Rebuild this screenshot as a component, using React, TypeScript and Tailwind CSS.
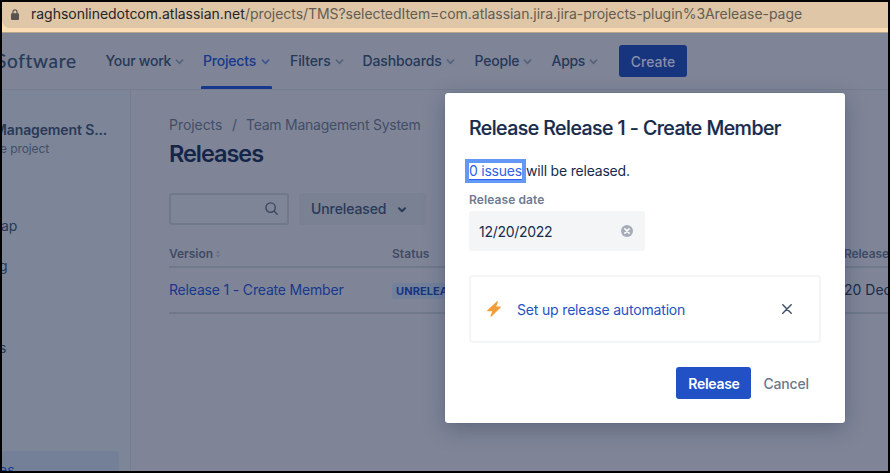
import React from "react";

function Chevron({ className }: { className: string }) {
  return (
    <svg viewBox="0 0 8 6" className={className} fill="none" stroke="currentColor" strokeWidth="1.7" strokeLinecap="round" strokeLinejoin="round">
      <path d="M1 1.2 4 4.3 7 1.2" />
    </svg>
  );
}

const navItems = [
  { label: "Your work", item: "w-[97px]", text: "-ml-[0.5px] w-[69px] tracking-[-0.25px]" },
  { label: "Projects", item: "w-[87px]", text: "w-[58px] tracking-[-0.2px]", active: true },
  { label: "Filters", item: "w-[73px]", text: "w-[45px] tracking-[-0.1px]" },
  { label: "Dashboards", item: "w-[112px]", text: "-ml-[0.5px] w-[83px] tracking-[-0.15px]" },
  { label: "People", item: "w-[77px]", text: "-ml-[0.5px] w-[48px] tracking-[-0.2px]" },
  { label: "Apps", item: "w-[67px]", text: "-ml-[0.5px] w-[37px] tracking-[-0.3px]" },
];

function AddressBar() {
  return (
    <div className="h-[31px] shrink-0 border-b border-[#b6a68d] bg-[#fcdcb4]">
      <div className="flex h-[26px] items-center rounded-bl-[8px] bg-[#dec6a6] pl-[9px]">
        <svg viewBox="0 0 8 11" className="-mt-[1px] h-[11px] w-[8px] text-[#58534f]">
          <rect x="0" y="4.3" width="8" height="6.7" rx="1" fill="currentColor" />
          <path d="M2 5V2.8a2 2 0 0 1 4 0V5" fill="none" stroke="currentColor" strokeWidth="1.2" />
        </svg>
        <div className="-mt-[2px] ml-[12px] flex whitespace-pre text-[14px] leading-[20px] text-[#635c53]">
          <span className="w-[214px] tracking-[-0.02px] text-[#24252a]">raghsonlinedotcom.atlassian.net</span>
          <span className="tracking-[-0.05px]">/projects/TMS?selectedItem=com.atlassian.jira.jira-projects-plugin%3Arelease-page</span>
        </div>
      </div>
    </div>
  );
}

function TopNav() {
  return (
    <header className="flex h-[57px] shrink-0 items-stretch border-b border-[#747e8f]">
      <div className="flex w-[104px] shrink-0 items-center overflow-hidden">
        <span className="-ml-[6px] whitespace-nowrap font-['Lato'] text-[19px] leading-[24px] tracking-[0.7px] text-[#263959] [-webkit-text-stroke:0.2px_#263959]">Software</span>
      </div>
      {navItems.map((n) => (
        <div key={n.label} className={`flex shrink-0 flex-col whitespace-nowrap text-[14px] font-medium text-[#253858] ${n.item}`}>
          <div className={`flex h-[53px] items-center pt-[3px] ${n.active ? "text-[#17388c]" : ""}`}>
            <span className={`-mt-[1px] shrink-0 ${n.text}`}>{n.label}</span>
            <Chevron className={`mt-[1px] h-[6px] w-[9px] shrink-0 ${n.active ? "text-[#3c5790]" : "text-[#56627b]"}`} />
          </div>
          {n.active && <div className="-ml-[2px] h-[3px] w-[71px] rounded-t-[1px] bg-[#17388c]" />}
        </div>
      ))}
      <button className="mt-[12px] h-[32px] w-[68px] rounded-[3px] bg-[#17347f] text-[14px] font-medium tracking-[-0.05px] text-[#8690aa]">Create</button>
    </header>
  );
}

function Sidebar() {
  return (
    <aside className="flex w-[129px] shrink-0 flex-col overflow-hidden whitespace-nowrap border-r border-[#747e8f] bg-[#7d8698] text-[14px] leading-[20px] text-[#293956]">
      <div className="mt-[30px] -ml-[8px] font-semibold tracking-[-0.12px]">Management S...</div>
      <div className="-ml-[2px] mt-[1px] text-[12px] leading-[16px] tracking-[-0.1px] text-[#424e68]">e project</div>
      <div className="-ml-[1px] mt-[59px]">ap</div>
      <div className="-ml-[3px] mt-[20px]">g</div>
      <div className="-ml-[3px] mt-[62px]">s</div>
      <div className="mt-[93px] h-[21px] w-[117px] overflow-hidden rounded-tr-[3px] bg-[#748098] pt-[9px] text-[#17388c]">
        <span className="-ml-[3px]">es</span>
      </div>
    </aside>
  );
}

function ReleasesPage() {
  return (
    <main className="min-w-0 flex-1 overflow-hidden whitespace-nowrap pl-[38px] text-[14px]">
      <nav className="mt-[25px] flex leading-[20px] text-[#424e68]">
        <span className="w-[63px] tracking-[-0.05px]">Projects</span>
        <span className="w-[14px]">/</span>
        <span className="tracking-[-0.25px]">Team Management System</span>
      </nav>
      <h1 className="mt-[5px] text-[23.5px] font-semibold leading-[28px] tracking-[-1.05px] text-[#14254a]">Releases</h1>
      <div className="mt-[25px] flex">
        <div className="flex h-[32px] w-[120px] items-center justify-end rounded-[3px] border-2 border-[#6f798a] bg-[#7d8597] pr-[9px]">
          <svg viewBox="0 0 13 13" className="-mt-[1px] h-[13px] w-[13px] text-[#3b4863]" fill="none" stroke="currentColor" strokeWidth="1.4" strokeLinecap="round">
            <circle cx="5.6" cy="5.6" r="4.7" />
            <path d="m9.2 9.2 3 3" />
          </svg>
        </div>
        <div className="ml-[10px] flex h-[32px] w-[127px] items-center rounded-[3px] bg-[#798193] pl-[12px] font-medium text-[#293956]">
          <span className="-mt-[1px] w-[87px] tracking-[-0.1px]">Unreleased</span>
          <svg viewBox="0 0 8 6" className="mt-[1px] h-[6px] w-[8px]" fill="none" stroke="currentColor" strokeWidth="2" strokeLinecap="round" strokeLinejoin="round">
            <path d="M1 1.2 4 4.2 7 1.2" />
          </svg>
        </div>
      </div>
      <div className="mt-[19px] flex h-[24px] border-b-2 border-[#6f798a] text-[12px] font-semibold leading-[20px] text-[#3f4b66]">
        <div className="flex w-[223px] shrink-0">
          <span className="tracking-[-0.05px]">Version</span>
          <svg viewBox="0 0 6 8" className="ml-[2px] mt-[6px] h-[8px] w-[6px] text-[#6b7587]" fill="currentColor">
            <path d="M0.5 3.2 3 .4 5.5 3.2zM0.5 4.8 3 7.6 5.5 4.8z" />
          </svg>
        </div>
        <span className="w-[452px] shrink-0 tracking-[0.05px]">Status</span>
        <span className="tracking-[-0.1px]">Release date</span>
      </div>
      <div className="flex h-[46px] items-center border-b-2 border-[#6f798a]">
        <span className="-mt-[1px] w-[223px] shrink-0 tracking-[-0.18px] text-[#17388c]">Release 1 - Create Member</span>
        <span className="flex w-[452px] shrink-0">
          <span className="mt-[1px] h-[16px] rounded-[3px] bg-[#72809a] px-[4px] text-[11px] font-bold leading-[16px] tracking-[0.1px] text-[#17347f]">UNRELEASED</span>
        </span>
        <span className="-mt-[1px] text-[#1c2b4b]">20 Dec 2022</span>
      </div>
    </main>
  );
}

function ReleaseDialog() {
  return (
    <section className="absolute left-[445px] top-[93px] flex h-[330px] w-[400px] flex-col whitespace-nowrap rounded-[3px] bg-white px-[24px] text-[14px] text-[#172b4d] shadow-[0_0_1px_rgba(9,30,66,0.31),0_6px_22px_rgba(9,30,66,0.28)]">
      <h2 className="mt-[23px] text-[19.5px] font-medium leading-[24px] tracking-[-0.54px] [-webkit-text-stroke:0.2px_#172b4d]">Release Release 1 - Create Member</h2>
      <div className="-ml-[4px] mt-[19px] flex h-[24px] items-center">
        <a className="flex h-[24px] w-[61px] items-center border-4 border-[#6498f6] pb-[2px] tracking-[-0.25px] text-[#2f62e6] underline underline-offset-[3px]">0 issues</a>
        <span className="-mt-[2px] tracking-[-0.2px]">will be released.</span>
      </div>
      <label className="mt-[9px] text-[12px] font-semibold leading-[16px] tracking-[0.1px] text-[#6f7b90]">Release date</label>
      <div className="mt-[3px] flex h-[40px] w-[176px] items-center justify-between rounded-[3px] bg-[#f4f5f7] pl-[10px] pr-[12px]">
        <span className="tracking-[-0.28px]">12/20/2022</span>
        <svg viewBox="0 0 12 12" className="h-[12px] w-[12px]">
          <circle cx="6" cy="6" r="6" fill="#a5adba" />
          <path d="m3.9 3.9 4.2 4.2m0-4.2L3.9 8.1" stroke="white" strokeWidth="1.5" strokeLinecap="round" />
        </svg>
      </div>
      <div className="mt-[24px] flex h-[68px] w-[352px] items-center rounded-[4px] border-2 border-[#f4f5f7] pl-[16px] pr-[27px]">
        <svg viewBox="0 0 14 16" className="h-[16px] w-[14px]" fill="#f29d38">
          <path d="M10.1.3c.5-.4 1 .1.8.6L9.2 5.6h4.1c.6 0 .8.6.4 1L4.2 15.7c-.5.4-1-.1-.8-.6l1.9-4.9H.7c-.6 0-.8-.6-.4-1z" />
        </svg>
        <a className="ml-[16px] flex-1 tracking-[-0.17px] text-[#2353c4]">Set up release automation</a>
        <svg viewBox="0 0 10 10" className="h-[10px] w-[10px]" fill="none" stroke="#42526e" strokeWidth="1.5" strokeLinecap="round">
          <path d="m.8.8 8.4 8.4m0-8.4L.8 9.2" />
        </svg>
      </div>
      <div className="mt-[24px] flex h-[32px] items-center self-end pr-[12px] font-medium">
        <button className="h-[32px] w-[75px] rounded-[3px] bg-[#2151c5] font-semibold tracking-[-0.3px] text-white">Release</button>
        <button className="ml-[12px] tracking-[-0.15px] text-[#6b778c]">Cancel</button>
      </div>
    </section>
  );
}

export default function App() {
  return (
    <div className="relative flex h-[473px] w-[890px] flex-col overflow-hidden border-2 border-black bg-[#7f8597] font-['Inter','Liberation_Sans',sans-serif]">
      <AddressBar />
      <TopNav />
      <div className="flex min-h-0 flex-1">
        <Sidebar />
        <ReleasesPage />
      </div>
      <div className="absolute -left-[2px] -top-[2px]">
        <ReleaseDialog />
      </div>
    </div>
  );
}
